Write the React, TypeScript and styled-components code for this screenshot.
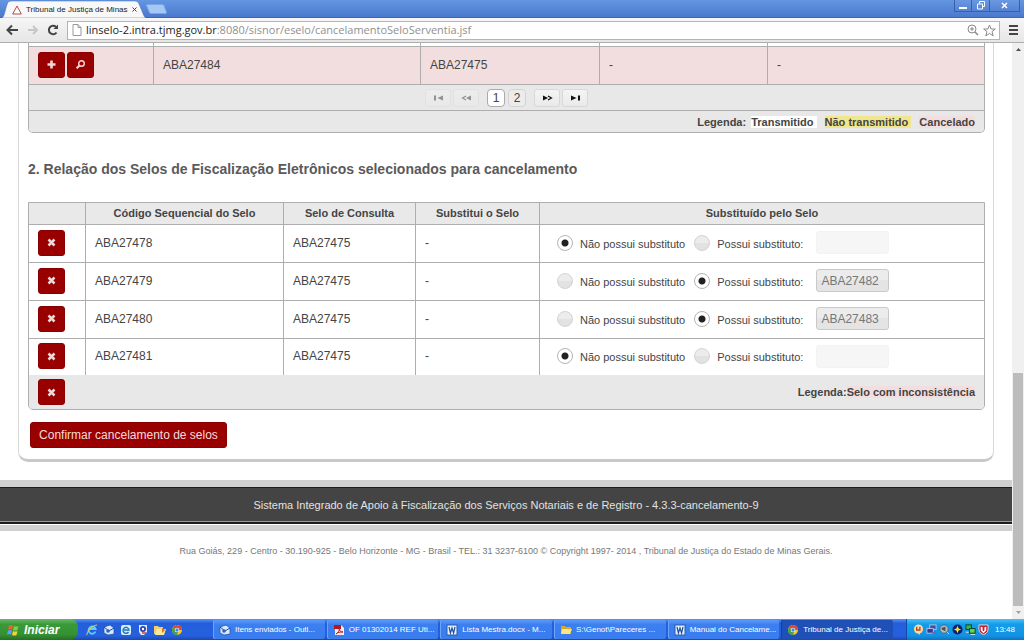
import React from "react";
import styled, { createGlobalStyle, css } from "styled-components";

const RED = "#990000";
const LINE = "#aeaeae";
const SANS = '"Liberation Sans", Arial, sans-serif';

const GlobalStyle = createGlobalStyle`
  * { box-sizing: border-box; }
  body { margin: 0; background: #fff; color: #444; font-family: ${SANS}; font-size: 12px; }
  button, input { font-family: inherit; margin: 0; }
  svg { display: block; flex: none; }
`;

const Screen = styled.div`
  display: flex;
  flex-direction: column;
  min-height: 100vh;
`;

/* ---------- browser chrome ---------- */

const TitleBar = styled.header`
  display: flex;
  align-items: flex-start;
  height: 18px;
  padding-left: 2px;
  background: linear-gradient(#6496e2, #4a78cf);
  border-bottom: 1px solid #3f66b4;
`;

const Tab = styled.div`
  position: relative;
  display: flex;
  align-items: center;
  gap: 4px;
  width: 144px;
  height: 18px;
  padding: 1px 9px 0 10px;
  font-size: 8px;
  color: #222;
`;

const TabShape = styled.svg`
  position: absolute;
  inset: 0;
`;

const TabTitle = styled.span`
  position: relative;
  flex: 1;
  white-space: nowrap;
`;

const TabIcon = styled.svg`
  position: relative;
`;

const TabClose = styled.button`
  position: relative;
  padding: 0;
  border: 0;
  background: none;
`;

const NewTab = styled.button`
  padding: 4px 0 0;
  border: 0;
  background: none;
`;

const WindowButtons = styled.div`
  display: flex;
  margin-left: auto;
  margin-right: 4px;
`;

const WindowButton = styled.button<{ $wide?: boolean }>`
  display: flex;
  justify-content: center;
  align-items: center;
  width: ${(p) => (p.$wide ? 30 : 18)}px;
  height: 12px;
  padding: 0;
  border: 1px solid #3c60a8;
  border-top: 0;
  border-left-width: 0;
  background: linear-gradient(#6a98e0, #5583d4);
  &:first-child { border-left-width: 1px; }
`;

const Toolbar = styled.nav`
  display: flex;
  align-items: center;
  gap: 8px;
  height: 25px;
  padding: 0 5px;
  background: linear-gradient(#f6f6f6, #e6e6e6);
  border-bottom: 1px solid ${LINE};
`;

const ToolButton = styled.button`
  display: flex;
  padding: 0;
  border: 0;
  background: none;
`;

const NavGroup = styled.div`
  display: flex;
  gap: 7px;
`;

const AddressBox = styled.div`
  display: flex;
  align-items: center;
  gap: 4px;
  flex: 1;
  height: 19px;
  padding: 0 3px 0 4px;
  border: 1px solid #b4b4b4;
  background: #fff;
`;

const Url = styled.div`
  flex: 1;
  font-family: "Open Sans", "Noto Sans", sans-serif;
  font-size: 11px;
  line-height: 16px;
  color: #909090;
  white-space: nowrap;
  b { font-weight: 400; color: #222; }
`;

const Viewport = styled.div`
  display: flex;
  flex: 1;
`;

const ScrollTrack = styled.div`
  display: flex;
  flex-direction: column;
  width: 12px;
  padding: 0 1px;
  background: #f0f0f0;
`;

const ScrollButton = styled.button`
  display: flex;
  align-items: center;
  justify-content: center;
  height: 13px;
  padding: 0;
  border: 0;
  background: none;
`;

const ScrollSpace = styled.div`
  flex: 317;
`;

const ScrollThumb = styled.div`
  flex: 233;
  background: #bcbcbc;
`;

/* ---------- page ---------- */

const Page = styled.div`
  flex: 1;
  min-width: 0;
`;

const Card = styled.main`
  margin: 0 18px;
  padding: 0 8px 11px 9px;
  border: 1px solid #d8d8d8;
  border-top: 0;
  border-bottom: 3px solid #c9c9c9;
  border-radius: 0 0 10px 10px;
`;

const Grid = styled.table<{ $topLine?: boolean }>`
  width: 100%;
  table-layout: fixed;
  border-collapse: separate;
  border-spacing: 0;
  overflow: hidden;
  border: 1px solid ${LINE};
  border-top-width: ${(p) => (p.$topLine ? 1 : 0)}px;
  border-radius: 0 0 5px 5px;
`;

const Col = styled.col<{ $w?: number }>`
  ${(p) => p.$w && css`width: ${p.$w}px;`}
`;

const cell = css`
  padding: 0 9px;
  border-bottom: 1px solid ${LINE};
  border-right: 1px solid ${LINE};
  &:last-child { border-right: 0; }
`;

const HeadCell = styled.th`
  ${cell}
  height: 22px;
  padding-bottom: 2px;
  background: #e9e9e9;
  font-size: 11px;
`;

const PeekCell = styled.td`
  ${cell}
  height: 4px;
`;

const Cell = styled.td<{ $cancelled?: boolean; $last?: boolean }>`
  ${cell}
  height: ${(p) => (p.$last ? 36 : 38)}px;
  padding-bottom: 2px;
  background: ${(p) => (p.$cancelled ? "#f2dede" : "#fff")};
  font-size: 12px;
  ${(p) => p.$last && css`border-bottom: 0;`}
`;

const FootCell = styled.td<{ $h: number; $line?: boolean; $end?: boolean }>`
  height: ${(p) => p.$h}px;
  padding: 0 9px;
  background: #e8e8e8;
  text-align: ${(p) => (p.$end ? "right" : "left")};
  font-size: 11px;
  font-weight: 700;
  ${(p) => p.$line && css`border-bottom: 1px solid ${LINE};`}
`;

const Mark = styled.span<{ $bg: string }>`
  margin-left: 5px;
  padding-right: 3px;
  background: ${(p) => p.$bg};
  &:last-child { padding-right: 0; }
`;

const InlineMark = styled.span`
  background: #f2dede;
`;

const Actions = styled.div`
  display: flex;
  gap: 2px;
`;

const IconButton = styled.button`
  display: flex;
  align-items: center;
  justify-content: center;
  width: 27px;
  height: 26px;
  padding: 0;
  border: 1px solid #8a0000;
  border-radius: 3px;
  background: ${RED};
`;

const Pager = styled.div`
  display: flex;
  justify-content: center;
  gap: 2px;
`;

const PagerButton = styled.button`
  display: flex;
  align-items: center;
  justify-content: center;
  width: 26px;
  height: 18px;
  padding: 0;
  border: 1px solid #d8d8d8;
  border-radius: 3px;
  background: linear-gradient(#f4f4f4, #eaeaea);
  color: #111;
  &:disabled { opacity: 0.4; }
`;

const PageNumbers = styled.div`
  display: flex;
  gap: 3px;
  margin: 0 6px;
`;

const PageNumber = styled.button<{ $current?: boolean }>`
  width: 18px;
  height: 18px;
  padding: 0;
  border: 1px solid ${(p) => (p.$current ? "#aaa" : "#d3d3d3")};
  border-radius: 4px;
  background: ${(p) => (p.$current ? "#fff" : "#ececec")};
  color: #444;
  font-size: 12px;
  line-height: 16px;
`;

const Heading = styled.h2`
  margin: 26px 0 23px;
  font-size: 14px;
  line-height: 20px;
  color: #5a5a5a;
`;

const Choices = styled.div`
  display: flex;
  align-items: center;
  gap: 9px;
  padding-left: 8px;
  white-space: nowrap;
`;

const Choice = styled.label`
  display: flex;
  align-items: center;
  gap: 7px;
  font-size: 11px;
`;

const ChoiceText = styled.span`
  padding-top: 2px;
`;

const Radio = styled.input`
  appearance: none;
  width: 16px;
  height: 16px;
  border: 1px solid #d3d3d3;
  border-radius: 50%;
  background: linear-gradient(#ececec 50%, #e2e2e2 50%);
  &:checked {
    border-color: #b4b4b4;
    background: radial-gradient(circle, #222 3px, #fff 4px);
  }
`;

const SealInput = styled.input`
  width: 73px;
  height: 23px;
  margin-left: 4px;
  padding: 0 4px;
  border: 1px solid #c9c9c9;
  border-radius: 3px;
  background: linear-gradient(#ececec 50%, #e4e4e4 50%);
  color: #777;
  font-size: 12px;
  &:disabled { border-color: #f3f3f3; background: #f6f6f6; }
`;

const ConfirmButton = styled.button`
  display: block;
  margin: 12px 0 0 2px;
  width: 197px;
  height: 26px;
  padding: 0;
  border: 1px solid #8a0000;
  border-radius: 3px;
  background: ${RED};
  color: #f3dcdc;
  font-size: 12px;
`;

const FooterBand = styled.footer`
  margin-top: 18px;
  border: solid #d0d0d0;
  border-width: 7px 0 6px;
`;

const FooterText = styled.div`
  height: 37px;
  margin-bottom: 1px;
  border-top: 1px solid #1c1c1c;
  border-bottom: 2px solid #1c1c1c;
  background: #444;
  box-shadow: inset 0 -1px 0 #999;
  color: #e2e2e2;
  font-size: 11px;
  line-height: 34px;
  text-align: center;
`;

const Address = styled.address`
  margin: 13px 0;
  color: #777;
  font-size: 9px;
  font-style: normal;
  line-height: 14px;
  text-align: center;
`;

/* ---------- taskbar ---------- */

const Taskbar = styled.div`
  display: flex;
  height: 21px;
  background: linear-gradient(#5a94f4, #245edb 20%, #2560de 80%, #1a48b0);
  font-size: 8px;
  color: #fff;
`;

const Start = styled.button`
  display: flex;
  align-items: center;
  gap: 4px;
  flex: none;
  width: 78px;
  padding: 0 0 0 7px;
  border: 0;
  border-radius: 0 8px 8px 0;
  background: linear-gradient(#6ab86a, #3a9a3a 25%, #339133 75%, #256e25);
  color: #fff;
  font-size: 12px;
  font-style: italic;
  font-weight: 700;
`;

const QuickLaunch = styled.div`
  display: flex;
  align-items: center;
  gap: 5px;
  flex: none;
  width: 135px;
  padding-left: 8px;
`;

const Tasks = styled.div`
  display: flex;
  flex: 1;
  gap: 2px;
  min-width: 0;
  padding: 1px 13px 1px 0;
`;

const Task = styled.button<{ $active?: boolean }>`
  display: flex;
  align-items: center;
  gap: 4px;
  flex: 1;
  min-width: 0;
  padding: 0 6px;
  border: 0;
  border-radius: 2px;
  background: ${(p) => (p.$active ? "#1e50b8" : "linear-gradient(#5c9afa, #3b7ff0 25%, #3a7cee)")};
  box-shadow: inset 1px 0 0 ${(p) => (p.$active ? "#17409a" : "#6aa4fb")};
  color: #fff;
  font-size: 8px;
  white-space: nowrap;
`;

const Tray = styled.div`
  display: flex;
  align-items: center;
  flex: none;
  gap: 2px;
  padding: 0 9px 0 6px;
  border-left: 1px solid #0f4aa8;
  background: linear-gradient(#4cc0f8, #139ceb 25%, #1292e4 80%, #0e72c0);
`;

const Clock = styled.time`
  margin-left: 4px;
`;

/* ---------- icons ---------- */

type IconName =
  | "ie" | "outlook" | "web" | "media" | "folders" | "chrome" | "pdf" | "word" | "folder"
  | "alert" | "network" | "volume" | "spark" | "monitors" | "shield";

const drawings: Record<IconName, React.ReactNode> = {
  ie: (
    <>
      <path d="M9.5 7.5A3.6 3.6 0 1 1 9.6 5H4" fill="none" stroke="#5ad0ff" strokeWidth="1.8" />
      <path d="M1 11C0 8 7 1 11 1" fill="none" stroke="#f5d040" />
    </>
  ),
  outlook: (
    <>
      <path d="M1 3l6-2 4 3v6l-6 1-4-2z" fill="#d8e8fc" stroke="#1c4a9c" strokeWidth=".7" />
      <path d="M1 3l5 4 5-3" fill="none" stroke="#1c4a9c" />
      <circle cx="5" cy="7" r="1.8" fill="#2864c8" />
    </>
  ),
  web: (
    <>
      <rect x="1" y="1" width="10" height="10" rx="2" fill="#d8ecfa" />
      <path d="M8.5 8A3 3 0 1 1 9 6H4" fill="none" stroke="#1878b8" strokeWidth="1.4" />
    </>
  ),
  media: (
    <>
      <path d="M2 1h8v7l-3 3H4L2 8z" fill="#e8e8f4" />
      <circle cx="6" cy="5" r="3" fill="#2848b0" />
      <circle cx="6" cy="5" r="1.2" fill="#fff" />
      <path d="M5 9h4" stroke="#d84030" strokeWidth="1.5" />
    </>
  ),
  folders: (
    <>
      <path d="M0 2h4l1 1h4v7H0z" fill="#f0d070" />
      <path d="M3 5h9l-2 6H1z" fill="#fae8a0" />
      <path d="M8 4l3 2-3 3z" fill="#d87818" />
    </>
  ),
  chrome: (
    <>
      <circle cx="6" cy="6" r="5" fill="#f5c92c" />
      <path d="M1.7 3.5A5 5 0 0 1 11 6H6z" fill="#dd4536" />
      <path d="M1.7 3.5A5 5 0 0 0 6 11l1.5-4z" fill="#3ca055" />
      <circle cx="6" cy="6" r="2.3" fill="#fff" />
      <circle cx="6" cy="6" r="1.7" fill="#4285e8" />
    </>
  ),
  pdf: (
    <>
      <path d="M2 1h6l3 3v7H2z" fill="#f8ecec" />
      <path d="M1 1h7v4H1z" fill="#b81818" />
      <path d="M3 10c3-2 4-5 3-6 0 3 2 4 4 4-3 0-5 0-7 2" fill="none" stroke="#c01818" />
    </>
  ),
  word: (
    <>
      <rect x="1" y="1" width="10" height="10" fill="#eaf2fc" stroke="#2a5caa" />
      <path d="M3 3l1.4 6L6 4l1.6 5L9 3" fill="none" stroke="#1c4f9e" strokeWidth="1.2" />
    </>
  ),
  folder: (
    <>
      <path d="M1 2h4l1 1h5v7H1z" fill="#d8a828" />
      <path d="M2 5h10l-2 5H1z" fill="#fbe684" />
    </>
  ),
  alert: (
    <>
      <circle cx="6" cy="5.5" r="5" fill="#f6dca0" />
      <path d="M5 9l2 3 1-3z" fill="#f6dca0" />
      <path d="M4 3v3.500h3.500V3" fill="none" stroke="#c84010" strokeWidth="1.5" />
    </>
  ),
  network: (
    <>
      <rect x="4" y="1" width="7" height="5" fill="#4050a8" stroke="#b8c4e4" />
      <rect x="1" y="5" width="7" height="5" fill="#303c90" stroke="#b8c4e4" />
      <path d="M7 8l3 3M10 8l-3 3" stroke="#e03030" />
    </>
  ),
  volume: (
    <>
      <circle cx="5.5" cy="5.5" r="4.5" fill="#b0bcc8" stroke="#54606c" />
      <path d="M3 4l4-1v5L3 6z" fill="#44505c" />
      <path d="M9 9l2 2" stroke="#d8e0e8" />
    </>
  ),
  spark: (
    <>
      <circle cx="6" cy="6" r="5.5" fill="#10206c" />
      <path d="M6 2l1.200 2.800L10 6 7.200 7.200 6 10 4.800 7.200 2 6l2.800-1.200z" fill="#f8e820" />
    </>
  ),
  monitors: (
    <>
      <rect x="1" y="1" width="6" height="5" fill="#38b848" stroke="#0c3c18" />
      <rect x="5" y="5" width="6" height="5" fill="#58d868" stroke="#0c3c18" />
      <path d="M1 9h3M6 11.500h5" stroke="#e4e8ec" />
    </>
  ),
  shield: (
    <>
      <path d="M1 1h10v5c0 3-3 5-5 5.500C4 11 1 9 1 6z" fill="#c81c2c" stroke="#f0dcdc" />
      <path d="M3 3l2 .5V7l1 1 1-1V3.500L9 3v4L6 10 3 7z" fill="#fff" />
    </>
  ),
};

const Icon = ({ name, size = 12 }: { name: IconName; size?: number }) => (
  <svg width={size} height={size} viewBox="0 0 12 12" aria-hidden="true">
    {drawings[name]}
  </svg>
);

const glyphs = {
  plus: <path d="M4.500 0.500v8M.5 4.500h8" stroke="#f0dada" strokeWidth="2.600" />,
  cross: <path d="M1.500 1.500l6 6M7.500 1.500l-6 6" stroke="#eed8d8" strokeWidth="2.5" />,
  search: (
    <>
      <circle cx="5.5" cy="3.5" r="2.800" fill="none" stroke="#f0dada" strokeWidth="1.4" />
      <path d="M3.500 5.500L.6 8.400" stroke="#f0dada" strokeWidth="2" />
    </>
  ),
};

const ActionButton = ({ glyph, label }: { glyph: keyof typeof glyphs; label: string }) => (
  <IconButton type="button" aria-label={label}>
    <svg width="9" height="9" viewBox="0 0 9 9">{glyphs[glyph]}</svg>
  </IconButton>
);

const PagerGlyph = ({ kind }: { kind: "first" | "prev" | "next" | "last" }) => (
  <svg width="11" height="6" viewBox="0 0 11 6" fill="currentColor">
    {kind === "first" && <path d="M1 .5h2v5H1zM10 .5v5L4.500 3z" />}
    {kind === "prev" && (
      <>
        <path d="M10 .5v5L5 3z" />
        <path d="M5 1L1.500 3 5 5" fill="none" stroke="currentColor" strokeWidth="1.2" />
      </>
    )}
    {kind === "next" && (
      <>
        <path d="M1 .5v5L6 3z" />
        <path d="M6 1l3.500 2L6 5" fill="none" stroke="currentColor" strokeWidth="1.2" />
      </>
    )}
    {kind === "last" && <path d="M8 .5h2v5H8zM1 .5v5L6.500 3z" />}
  </svg>
);

/* ---------- data ---------- */

const selos = [
  { code: "ABA27478", query: "ABA27475", substitute: "" },
  { code: "ABA27479", query: "ABA27475", substitute: "ABA27482" },
  { code: "ABA27480", query: "ABA27475", substitute: "ABA27483" },
  { code: "ABA27481", query: "ABA27475", substitute: "" },
];

const tasks: { icon: IconName; title: string; active?: boolean }[] = [
  { icon: "outlook", title: "Itens enviados - Outl..." },
  { icon: "pdf", title: "OF 01302014 REF Uti..." },
  { icon: "word", title: "Lista Mestra.docx - M..." },
  { icon: "folder", title: "S:\\Genot\\Pareceres ..." },
  { icon: "word", title: "Manual do Cancelame..." },
  { icon: "chrome", title: "Tribunal de Justiça de...", active: true },
];

const quick: IconName[] = ["ie", "outlook", "web", "media", "folders", "chrome"];
const tray: IconName[] = ["alert", "network", "volume", "spark", "monitors", "shield"];

/* ---------- sections ---------- */

const BrowserBars = () => (
  <>
    <TitleBar>
      <Tab>
        <TabShape width="144" height="18" viewBox="0 0 144 18">
          <path d="M0 18C3 17 4 3 7 1.500Q8 1 10 1H133Q136 1 137 4L142 16Q143 18 144 18z" fill="#f8f8f8" stroke="#4a6fb5" strokeWidth=".5" />
        </TabShape>
        <TabIcon width="10" height="10" viewBox="0 0 10 10">
          <path d="M5 1L9.300 9H.7z" fill="#fff" stroke="#b04a4a" />
        </TabIcon>
        <TabTitle>Tribunal de Justiça de Minas</TabTitle>
        <TabClose type="button" aria-label="Fechar guia">
          <svg width="5" height="5" viewBox="0 0 5 5">
            <path d="M.5.5l4 4M4.500.5l-4 4" stroke="#444" />
          </svg>
        </TabClose>
      </Tab>
      <NewTab type="button" aria-label="Nova guia">
        <svg width="21" height="10" viewBox="0 0 21 10">
          <path d="M1 .5h15q1.500 0 2 1l2.500 7q0 1-1 1H5q-1 0-1.500-1L.5 1.500z" fill="#a4c8f6" stroke="#7ba6e6" />
        </svg>
      </NewTab>
      <WindowButtons>
        <WindowButton type="button" aria-label="Minimizar">
          <svg width="8" height="8" viewBox="0 0 8 8"><path d="M0 6h8" stroke="#fff" strokeWidth="2" /></svg>
        </WindowButton>
        <WindowButton type="button" aria-label="Restaurar">
          <svg width="8" height="9" viewBox="0 0 8 9">
            <path d="M2.500 2.500v-2h5v5h-2M.5 3h5v5h-5z" fill="none" stroke="#fff" />
          </svg>
        </WindowButton>
        <WindowButton type="button" aria-label="Fechar" $wide>
          <svg width="7" height="7" viewBox="0 0 7 7"><path d="M1 1l5 5M6 1L1 6" stroke="#fff" strokeWidth="1.5" /></svg>
        </WindowButton>
      </WindowButtons>
    </TitleBar>
    <Toolbar>
      <NavGroup>
        <ToolButton type="button" aria-label="Voltar">
          <svg width="14" height="12" viewBox="0 0 14 12"><path d="M13 6H3M7 1.500L2.500 6 7 10.500" fill="none" stroke="#444" strokeWidth="2" /></svg>
        </ToolButton>
        <ToolButton type="button" aria-label="Avançar">
          <svg width="14" height="12" viewBox="0 0 14 12"><path d="M2 6h9M7 2l4 4-4 4" fill="none" stroke="#c6c6c6" strokeWidth="2" /></svg>
        </ToolButton>
        <ToolButton type="button" aria-label="Recarregar">
          <svg width="12" height="12" viewBox="0 0 12 12">
            <path d="M9.500 8.500A4.200 4.200 0 1 1 9 3" fill="none" stroke="#444" strokeWidth="2" />
            <path d="M11 .5V5H6.500z" fill="#444" />
          </svg>
        </ToolButton>
      </NavGroup>
      <AddressBox>
        <svg width="10" height="12" viewBox="0 0 10 12"><path d="M1 .5h5l3 3v8H1zM6 .5v3h3" fill="#fff" stroke="#999" /></svg>
        <Url><b>linselo-2.intra.tjmg.gov.br</b>:8080/sisnor/eselo/cancelamentoSeloServentia.jsf</Url>
        <svg width="12" height="12" viewBox="0 0 12 12">
          <circle cx="5" cy="5" r="4" fill="none" stroke="#888" />
          <path d="M3 5h4M5 3v4" stroke="#888" />
          <path d="M8 8l3 3" stroke="#888" strokeWidth="1.5" />
        </svg>
        <svg width="13" height="13" viewBox="0 0 13 13">
          <path d="M6.500 1l1.600 4h4.200L9 7.600l1.200 4.300-3.700-2.500-3.700 2.500L4 7.600.7 5h4.200z" fill="#fff" stroke="#888" />
        </svg>
      </AddressBox>
      <ToolButton type="button" aria-label="Menu">
        <svg width="11" height="10" viewBox="0 0 11 10"><path d="M1 1h9M1 5h9M1 9h9" stroke="#444" strokeWidth="2" /></svg>
      </ToolButton>
    </Toolbar>
  </>
);

const SealList = () => (
  <Grid>
    <colgroup>
      <Col $w={125} /><Col $w={267} /><Col $w={179} /><Col $w={168} /><Col />
    </colgroup>
    <tbody>
      <tr><PeekCell /><PeekCell /><PeekCell /><PeekCell /><PeekCell /></tr>
      <tr>
        <Cell $cancelled>
          <Actions>
            <ActionButton glyph="plus" label="Adicionar" />
            <ActionButton glyph="search" label="Consultar" />
          </Actions>
        </Cell>
        <Cell $cancelled>ABA27484</Cell>
        <Cell $cancelled>ABA27475</Cell>
        <Cell $cancelled>-</Cell>
        <Cell $cancelled>-</Cell>
      </tr>
    </tbody>
    <tfoot>
      <tr>
        <FootCell colSpan={5} $h={26} $line>
          <Pager>
            <PagerButton type="button" disabled aria-label="Primeira"><PagerGlyph kind="first" /></PagerButton>
            <PagerButton type="button" disabled aria-label="Anterior"><PagerGlyph kind="prev" /></PagerButton>
            <PageNumbers>
              <PageNumber type="button" $current>1</PageNumber>
              <PageNumber type="button">2</PageNumber>
            </PageNumbers>
            <PagerButton type="button" aria-label="Próxima"><PagerGlyph kind="next" /></PagerButton>
            <PagerButton type="button" aria-label="Última"><PagerGlyph kind="last" /></PagerButton>
          </Pager>
        </FootCell>
      </tr>
      <tr>
        <FootCell colSpan={5} $h={21} $end>
          Legenda:<Mark $bg="#fff">Transmitido</Mark> <Mark $bg="#f0e68c">Não transmitido</Mark>{" "}
          <Mark $bg="#f2dede">Cancelado</Mark>
        </FootCell>
      </tr>
    </tfoot>
  </Grid>
);

const CancelList = () => (
  <Grid $topLine>
    <colgroup>
      <Col $w={57} /><Col $w={198} /><Col $w={132} /><Col $w={124} /><Col />
    </colgroup>
    <thead>
      <tr>
        <HeadCell />
        <HeadCell>Código Sequencial do Selo</HeadCell>
        <HeadCell>Selo de Consulta</HeadCell>
        <HeadCell>Substitui o Selo</HeadCell>
        <HeadCell>Substituído pelo Selo</HeadCell>
      </tr>
    </thead>
    <tbody>
      {selos.map((s, i) => {
        const last = i === selos.length - 1;
        return (
          <tr key={s.code}>
            <Cell $last={last}><ActionButton glyph="cross" label={`Remover ${s.code}`} /></Cell>
            <Cell $last={last}>{s.code}</Cell>
            <Cell $last={last}>{s.query}</Cell>
            <Cell $last={last}>-</Cell>
            <Cell $last={last}>
              <Choices>
                <Choice>
                  <Radio type="radio" name={s.code} defaultChecked={!s.substitute} />
                  <ChoiceText>Não possui substituto</ChoiceText>
                </Choice>
                <Choice>
                  <Radio type="radio" name={s.code} defaultChecked={!!s.substitute} />
                  <ChoiceText>Possui substituto:</ChoiceText>
                </Choice>
                <SealInput
                  aria-label={`Substituto de ${s.code}`}
                  defaultValue={s.substitute}
                  disabled={!s.substitute}
                />
              </Choices>
            </Cell>
          </tr>
        );
      })}
    </tbody>
    <tfoot>
      <tr>
        <FootCell $h={34}><ActionButton glyph="cross" label="Remover todos" /></FootCell>
        <FootCell $h={34} $end colSpan={4}>
          Legenda:<InlineMark>Selo com inconsistência</InlineMark>
        </FootCell>
      </tr>
    </tfoot>
  </Grid>
);

const DesktopBar = () => (
  <Taskbar>
    <Start type="button">
      <svg width="13" height="12" viewBox="0 0 13 12">
        <path d="M2 1.500q2-1 4 0L5 5.500q-2-1-4 0z" fill="#f06030" />
        <path d="M7 2q2 1 4.500 0l-1 4q-2 1-4.500 0z" fill="#80d040" />
        <path d="M1 6.500q2-1 4 0L4 10.500q-2-1-4 0z" fill="#60a0f8" />
        <path d="M6 7q2 1 4.500 0l-1 4q-2 1-4.500 0z" fill="#f8d030" />
      </svg>
      Iniciar
    </Start>
    <QuickLaunch>
      {quick.map((name) => <Icon key={name} name={name} />)}
    </QuickLaunch>
    <Tasks>
      {tasks.map((t) => (
        <Task key={t.title} type="button" $active={t.active}>
          <Icon name={t.icon} />
          {t.title}
        </Task>
      ))}
    </Tasks>
    <Tray>
      {tray.map((name) => <Icon key={name} name={name} size={11} />)}
      <Clock>13:48</Clock>
    </Tray>
  </Taskbar>
);

export default function App() {
  return (
    <Screen>
      <GlobalStyle />
      <BrowserBars />
      <Viewport>
        <Page>
          <Card>
            <SealList />
            <Heading>2. Relação dos Selos de Fiscalização Eletrônicos selecionados para cancelamento</Heading>
            <CancelList />
            <ConfirmButton type="button">Confirmar cancelamento de selos</ConfirmButton>
          </Card>
          <FooterBand>
            <FooterText>
              Sistema Integrado de Apoio à Fiscalização dos Serviços Notariais e de Registro - 4.3.3-cancelamento-9
            </FooterText>
          </FooterBand>
          <Address>
            Rua Goiás, 229 - Centro - 30.190-925 - Belo Horizonte - MG - Brasil - TEL.: 31 3237-6100 © Copyright 1997-
            2014 , Tribunal de Justiça do Estado de Minas Gerais.
          </Address>
        </Page>
        <ScrollTrack aria-hidden="true">
          <ScrollButton type="button" tabIndex={-1}>
            <svg width="5" height="3" viewBox="0 0 5 3"><path d="M0 3h5L2.500 0z" fill="#505050" /></svg>
          </ScrollButton>
          <ScrollSpace />
          <ScrollThumb />
          <ScrollButton type="button" tabIndex={-1}>
            <svg width="5" height="3" viewBox="0 0 5 3"><path d="M0 0h5L2.500 3z" fill="#a0a0a0" /></svg>
          </ScrollButton>
        </ScrollTrack>
      </Viewport>
      <DesktopBar />
    </Screen>
  );
}
